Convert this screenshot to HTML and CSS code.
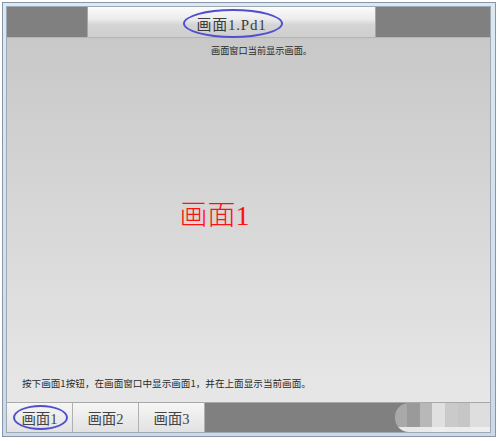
FILE: index.html
```html
<!DOCTYPE html>
<html lang="zh">
<head>
<meta charset="utf-8">
<title>画面1.Pd1</title>
<link rel="stylesheet" href="styles.css">
</head>
<body>
<div class="window">
  <div class="inner">
    <div class="header">
      <div class="hdr-side"></div>
      <div class="hdr-title">
        <span class="title-text">画面1.Pd1</span>
        <span class="mark mark-title"></span>
      </div>
      <div class="hdr-side"></div>
    </div>
    <div class="main">
      <div class="subtitle">画面窗口当前显示画面。</div>
      <div class="stage"><span class="big">画面1</span></div>
      <div class="note">按下画面1按钮，在画面窗口中显示画面1，并在上面显示当前画面。</div>
    </div>
    <div class="tabbar">
      <div class="tab">画面1<span class="mark mark-tab"></span></div>
      <div class="tab">画面2</div>
      <div class="tab">画面3</div>
      <div class="blur"></div>
    </div>
  </div>
</div>
</body>
</html>
```

FILE: styles.css
```css
html, body {
  margin: 0;
  padding: 0;
  background: #ffffff;
}

body {
  width: 498px;
  height: 440px;
  overflow: hidden;
  font-family: "Liberation Serif", "Noto Sans CJK SC", serif;
}

.window {
  box-sizing: border-box;
  margin: 2px 0 0 2px;
  width: 494px;
  height: 435px;
  border: 1px solid #8796a8;
  padding: 4px 5px 4px 4px;
  background: linear-gradient(180deg, #dde8f3 0%, #cbd9e8 100%);
}

.inner {
  height: 425px;
  display: flex;
  flex-direction: column;
  box-shadow: 0 0 0 1px #9fa9b4;
}

/* header */
.header {
  height: 30px;
  display: grid;
  grid-template-columns: 80px 289px 1fr;
  background: #808080;
}

.hdr-side {
  background: #808080;
}

.hdr-title {
  position: relative;
  display: flex;
  align-items: center;
  justify-content: center;
  background: linear-gradient(180deg, #fbfbfb 0%, #ececec 40%, #d4d4d4 60%, #cfcfcf 100%);
  border-left: 1px solid #a6a6a6;
  border-right: 1px solid #a6a6a6;
  box-sizing: border-box;
}

.title-text {
  font-size: 15px;
  color: #3c3c3c;
  padding-top: 2px;
  letter-spacing: 0.8px;
}

.mark {
  position: absolute;
  box-sizing: border-box;
  border: 2px solid #4f4fd0;
  border-radius: 50%;
}

.mark-title {
  left: 95px;
  top: 2px;
  width: 100px;
  height: 29px;
}

/* main */
.main {
  height: 365px;
  display: flex;
  flex-direction: column;
  background: linear-gradient(180deg, #c8c8c8 0%, #d6d6d6 45%, #e7e7e7 100%);
  border-top: 1px solid #b4b4b4;
  box-sizing: border-box;
}

.subtitle {
  font-family: "Noto Sans CJK SC", sans-serif;
  font-size: 9.2px;
  line-height: 12px;
  color: #2a2a2a;
  text-align: center;
  padding: 6px 0 0 26px;
}

.stage {
  flex: 1;
  display: flex;
  align-items: center;
  justify-content: center;
  padding: 0 68px 8px 0;
}

.big {
  font-size: 28px;
  color: #ff1010;
  font-weight: 300;
}

.note {
  font-family: "Noto Sans CJK SC", sans-serif;
  font-size: 9.6px;
  line-height: 12px;
  color: #2a2a2a;
  padding: 0 0 13px 15px;
}

/* tab bar */
.tabbar {
  height: 30px;
  display: flex;
  background: #808080;
  border-top: 1px solid #a8a8a8;
  box-sizing: border-box;
}

.tab {
  position: relative;
  width: 66px;
  box-sizing: border-box;
  display: flex;
  align-items: center;
  justify-content: center;
  font-size: 14.5px;
  color: #444444;
  background: linear-gradient(180deg, #f6f6f6 0%, #ececec 50%, #e2e2e2 100%);
  border-right: 1px solid #b0b0b0;
}

.mark-tab {
  left: 6px;
  top: 2px;
  width: 55px;
  height: 25px;
}

.blur {
  margin-left: auto;
  width: 95px;
  height: 29px;
  border-radius: 14px 0 0 14px;
  background:
    linear-gradient(180deg, rgba(255,255,255,0) 0%, rgba(255,255,255,0) 82%, rgba(240,240,240,0.9) 83%),
    linear-gradient(90deg, #a9a9a9 0 12px, #9a9a9a 12px 25px, #b8b8b8 25px 37px, #e0e0e0 37px 50px, #cacaca 50px 63px, #c6c6c6 63px 75px, #dedede 75px 100%);
}
```
